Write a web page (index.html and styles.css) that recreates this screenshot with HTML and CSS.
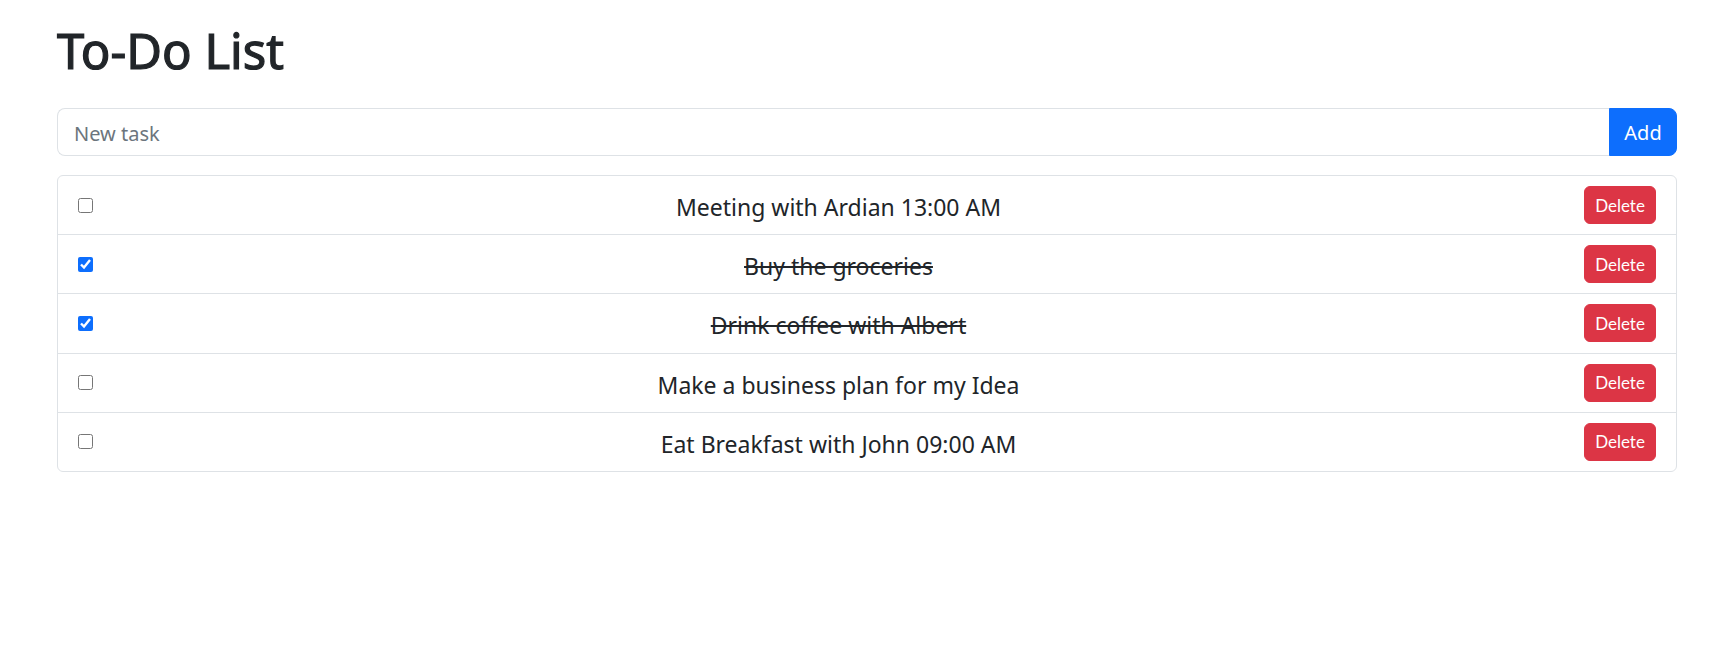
FILE: index.html
```html
<!DOCTYPE html>
<html lang="en">
<head>
<meta charset="utf-8">
<title>To-Do List</title>
<link rel="stylesheet" href="styles.css">
</head>
<body>
<main class="app">
  <h1 class="title">To-Do List</h1>
  <form class="add-form">
    <input class="task-input" type="text" placeholder="New task">
    <button class="add-btn" type="button">Add</button>
  </form>
  <ul class="task-list">
    <li class="task">
      <input class="task-check" type="checkbox">
      <span class="task-text">Meeting with Ardian 13:00 AM</span>
      <button class="delete-btn" type="button">Delete</button>
    </li>
    <li class="task done">
      <input class="task-check" type="checkbox" checked>
      <span class="task-text">Buy the groceries</span>
      <button class="delete-btn" type="button">Delete</button>
    </li>
    <li class="task done">
      <input class="task-check" type="checkbox" checked>
      <span class="task-text">Drink coffee with Albert</span>
      <button class="delete-btn" type="button">Delete</button>
    </li>
    <li class="task">
      <input class="task-check" type="checkbox">
      <span class="task-text">Make a business plan for my Idea</span>
      <button class="delete-btn" type="button">Delete</button>
    </li>
    <li class="task">
      <input class="task-check" type="checkbox">
      <span class="task-text">Eat Breakfast with John 09:00 AM</span>
      <button class="delete-btn" type="button">Delete</button>
    </li>
  </ul>
</main>
</body>
</html>
```

FILE: styles.css
```css
* { box-sizing: border-box; }

html, body {
  margin: 0;
  padding: 0;
  background: #fff;
}

body {
  font-family: "Noto Sans", "Open Sans", sans-serif;
  color: #212529;
}

.app {
  padding: 21px 55px 0 57px;
}

.title {
  margin: 0 0 28px 0;
  font-size: 49px;
  font-weight: 400;
  line-height: 59px;
  color: #212529;
  -webkit-text-stroke: 1.2px #212529;
}

.add-form {
  display: flex;
  margin: 0 0 19px 0;
}

.task-input {
  flex: 1;
  height: 48px;
  padding: 9px 16px 7px;
  font-family: inherit;
  font-size: 20px;
  color: #212529;
  border: 1px solid #dee2e6;
  border-right: none;
  border-radius: 8px 0 0 8px;
  outline: none;
}

.task-input::placeholder {
  color: #6c757d;
}

.add-btn {
  width: 68px;
  height: 48px;
  padding: 0;
  font-family: inherit;
  font-size: 20px;
  color: #fff;
  background: #0d6efd;
  border: 1px solid #0d6efd;
  border-radius: 0 8px 8px 0;
}

.task-list {
  list-style: none;
  margin: 0;
  padding: 0;
  border: 1px solid #dee2e6;
  border-radius: 6px;
}

.task {
  display: flex;
  align-items: center;
  padding: 10.1px 20px;
  border-top: 1px solid #dee2e6;
}

.task:first-child {
  border-top: none;
}

.task-check {
  width: 15px;
  height: 15px;
  margin: 0;
  accent-color: #0d6efd;
  flex: none;
}

.task-text {
  flex: 1;
  text-align: center;
  font-size: 23px;
  line-height: 1.4;
  padding-top: 4px;
}

.done .task-text {
  text-decoration: line-through;
  text-decoration-thickness: 2px;
}

.delete-btn {
  flex: none;
  width: 72px;
  height: 38px;
  padding: 0;
  font-family: "Lato", sans-serif;
  font-size: 17px;
  color: #fff;
  background: #dc3545;
  border: 1px solid #dc3545;
  border-radius: 6px;
}
```
